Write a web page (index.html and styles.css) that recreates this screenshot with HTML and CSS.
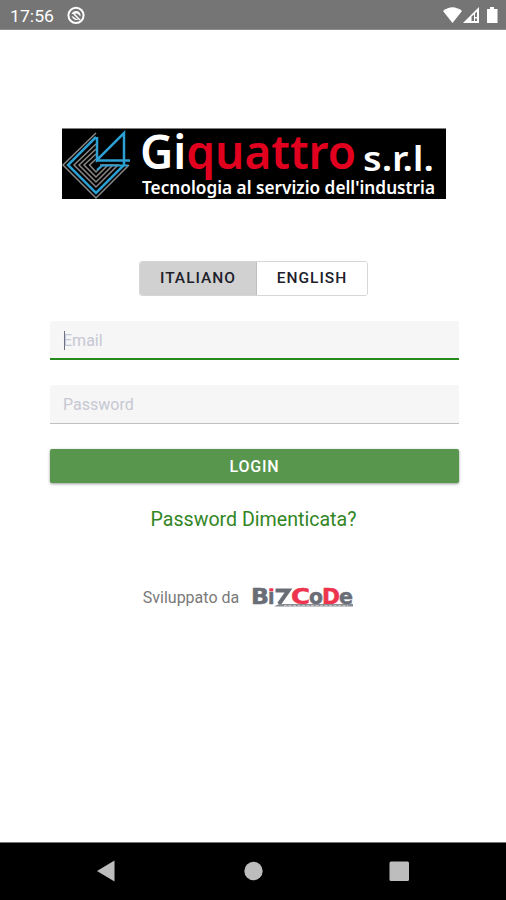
FILE: index.html
```html
<!DOCTYPE html>
<html lang="it">
<head>
<meta charset="utf-8">
<meta name="viewport" content="width=device-width, initial-scale=1">
<title>Giquattro</title>
<link rel="stylesheet" href="styles.css">
</head>
<body>
<header class="status">
  <svg class="status-left" width="100" height="30" viewBox="0 0 100 30">
    <text class="clock" x="10" y="21.5" textLength="44" lengthAdjust="spacingAndGlyphs">17:56</text>
    <circle cx="76" cy="15.300" r="7.600" fill="none" stroke="#fff" stroke-width="2"/>
    <path d="M71.500 14Q73 10.500 77 11Q81 12 80.500 16.500L78.500 14.500Q77 13 74.500 14ZM71.500 16Q73 16 74.500 17.500Q76 19 78.500 19.500Q74 21.500 71.500 16Z" fill="#fff"/>
    <path d="M74 14L80 20" stroke="#fff" stroke-width="1.500"/>
  </svg>
  <svg width="64" height="30" viewBox="442 0 64 30" fill="#fff">
    <path d="M443 11Q452.500 3.500 462 11L452.500 23Z"/>
    <path fill-rule="evenodd" d="M463 23L479 7V23ZM471.500 16.500V21H474V14.500ZM475 13.500V17H477V11.500ZM475 18.500V21H477V18.500Z"/>
    <path d="M490 7h4v2h3.500v14h-10.500V9h3z"/>
  </svg>
</header>
<main class="page">
  <svg class="logo" width="385" height="71" viewBox="62 128 385 71" role="img" aria-label="Giquattro s.r.l.">
    <path d="M62 128.500h384v70.500H62z" fill="#000"/>
    <g fill="none" stroke="#8b8784" stroke-width="1.500">
      <path d="M96 133L63 165L96 198L129 165"/>
      <path d="M96 144L74 165L96 187L118 165H100"/>
      <path d="M96 149L79 165L96 182L113 165"/>
      <path d="M96 154L84 165L96 177L108 165"/>
      <path d="M96 159L89.500 165L96 172L103 165"/>
    </g>
    <g fill="none" stroke="#2c9fd3" stroke-width="2.500">
      <path d="M96 137L68 165L96 193L124 165V133L97 160V137"/>
      <path d="M96 160.500H130"/><path d="M97 170L102 165.500H128" stroke-width="2"/>
    </g>
    <text class="brand" x="140" y="168.500" textLength="216" lengthAdjust="spacingAndGlyphs">Gi<tspan fill="#e2001f">quattro</tspan></text>
    <text class="srl" x="363" y="170.500" textLength="71" lengthAdjust="spacingAndGlyphs">s.r.l.</text>
    <text class="tagline" x="142" y="193.700" textLength="293" lengthAdjust="spacingAndGlyphs">Tecnologia al servizio dell'industria</text>
  </svg>
  <div class="languages"><button class="language selected">ITALIANO</button><button class="language">ENGLISH</button></div>
  <form class="form">
    <div class="field active"><span class="caret"></span><span>Email</span></div>
    <div class="field"><span>Password</span></div>
    <button class="login" type="button">LOGIN</button>
  </form>
  <a class="forgot">Password Dimenticata?</a>
  <div class="credit"><span>Sviluppato da</span>
    <svg width="104" height="24" viewBox="250 586 104 24" role="img" aria-label="BizCode">
      <g class="bizcode" fill="#696d76" stroke="#696d76">
        <text x="251" y="604.500" textLength="18" lengthAdjust="spacingAndGlyphs">B</text>
        <text x="268" y="604.500" textLength="6.500" lengthAdjust="spacingAndGlyphs">ı</text>
        <text x="291" y="604.500" textLength="19" lengthAdjust="spacingAndGlyphs" fill="#ed344c" stroke="#ed344c">C</text>
        <text x="309" y="604.500" textLength="14" lengthAdjust="spacingAndGlyphs">o</text>
        <text x="322" y="604.500" textLength="18" lengthAdjust="spacingAndGlyphs" fill="#ed344c" stroke="#ed344c">D</text>
        <text x="339" y="604.500" textLength="14" lengthAdjust="spacingAndGlyphs">e</text>
      </g>
      <path d="M269.300 589.300h4v3h-4z" fill="#ed344c"/>
      <path d="M275.500 591.500H288.500L279 605" fill="none" stroke="#696d76" stroke-width="4"/>
      <path d="M274 607.500L279 605H353V607.500Z" fill="#888b91"/><path d="M284 606.500H348" stroke="#c2c3c6" stroke-dasharray="3 1.500"/>
    </svg>
  </div>
</main>
<nav class="navigation">
  <svg width="506" height="58" viewBox="0 842 506 58" fill="#bdbdbd"><path d="M97 870L114.500 859.500V880.500Z"/><circle cx="253.500" cy="870" r="9.200"/><rect x="389.500" y="860.500" width="19.500" height="19.500" rx="1.500"/></svg>
</nav>
</body>
</html>
```
FILE: styles.css
```css
* { box-sizing: border-box; }
body { margin: 0; width: 506px; height: 900px; display: flex; flex-direction: column; background: #fff; font-family: Roboto, sans-serif; overflow: hidden; }
svg { display: block; flex: none; overflow: visible; }
button { font: inherit; padding: 0; }
.status { height: 30px; flex: none; background: #757575; display: flex; justify-content: space-between; border-bottom: 1px solid #8d8d8d; }
.clock { font-size: 17px; fill: #fff; }
.page { flex: 1; display: flex; flex-direction: column; align-items: center; padding-top: 98px; }
.logo { margin-left: 3px; }
.brand { font: 600 46px "Noto Sans", sans-serif; fill: #fff; }
.srl { font: 600 34px "Noto Sans", sans-serif; fill: #fff; }
.tagline { font: 600 17.5px "Noto Sans", sans-serif; fill: #fff; }
.languages { width: 229px; height: 35px; margin-top: 62px; margin-left: 1px; display: flex; border: 1px solid #d6d6d6; border-radius: 3px; overflow: hidden; }
.language { flex: 1; border: 0; padding-bottom: 2px; background: #fff; color: #20202b; font-size: 15.5px; font-weight: 500; letter-spacing: 1px; }
.language.selected { flex: 0 0 117px; background: #d1d1d1; border-right: 1px solid #bfbfbf; }
.form { width: 409px; margin: 25px 0 0 3px; }
.field { height: 39px; margin-bottom: 25px; padding: 1px 13px 0; display: flex; align-items: center; background: #f6f6f6; border-bottom: 1px solid #c1c1c1; border-radius: 3px 3px 0 0; color: #c6c8d3; font-size: 16px; position: relative; }
.field.active { padding-top: 2px; border-bottom: 2px solid #258b1d; }
.caret { width: 1px; height: 19px; background: #707080; position: absolute; left: 14px; top: 10px; }
.login { display: block; width: 100%; height: 34px; border: 0; border-radius: 2px; background: #58964d; color: #fff; font-size: 16px; font-weight: 500; letter-spacing: .8px; box-shadow: 0 1px 3px #0006; }
.forgot { margin: 25px 0 0 1px; color: #328624; font-size: 19.6px; line-height: 24px; }
.credit { display: flex; align-items: center; gap: 11px; margin: 53px 0 0 -9px; color: #797979; font-size: 16px; }
.bizcode { font: 700 20.5px "DejaVu Sans", sans-serif; stroke-width: .5px; }
.navigation { height: 58px; flex: none; background: #000; border-top: 1px solid #777; }
```
